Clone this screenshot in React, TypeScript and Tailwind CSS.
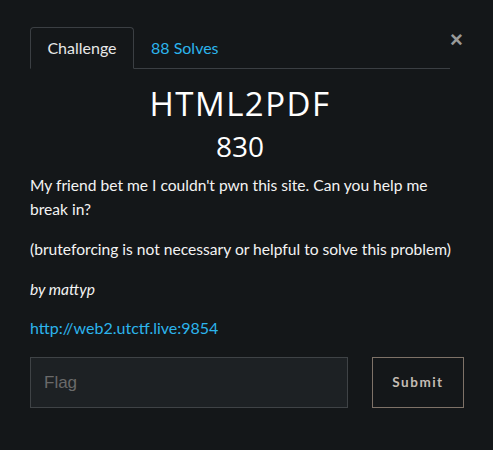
import React from "react";

export default function App() {
  return (
    <div className="w-[493px] h-[450px] bg-[#141719] text-white font-['Lato',sans-serif] relative overflow-hidden">
      <button className="absolute left-[450px] top-[29px] text-[#9a9a9a] text-[22px] leading-none font-bold font-['Liberation_Sans',sans-serif]">
        ×
      </button>
      <div className="pl-[30px] pr-[29px] pt-[27px]">
        <div className="flex border-b border-[#3b3f43] w-[420px]">
          <div className="h-[42px] w-[104px] -mb-px border border-[#3b3f43] border-b-[#141719] rounded-t-[4px] flex items-center justify-center text-[16px] text-[#e8e8e8]">
            Challenge
          </div>
          <div className="h-[41px] pl-[17px] flex items-center text-[16px] text-[#2cb4ec]">
            88 Solves
          </div>
        </div>
        <div className="w-[420px] text-center mt-[15px] text-[33px] leading-[40px] tracking-[1.5px] font-['Open_Sans',sans-serif] font-normal">
          HTML2PDF
        </div>
        <div className="w-[420px] text-center mt-[5px] text-[28px] leading-[34px] font-['Open_Sans',sans-serif]">
          830
        </div>
        <div className="mt-[10px] text-[15.6px] leading-[24px] text-[#f3f3f3]">
          <p className="w-[420px]">My friend bet me I couldn't pwn this site. Can you help me break in?</p>
          <p className="mt-[16px] whitespace-nowrap">(bruteforcing is not necessary or helpful to solve this problem)</p>
          <p className="mt-[16px] italic">by mattyp</p>
          <p className="mt-[15px]">
            <a className="text-[#2cb4ec] text-[16px]">http://web2.utctf.live:9854</a>
          </p>
        </div>
        <div className="mt-[17px] flex gap-[24px] w-[434px]">
          <div className="w-[318px] h-[51px] bg-[#1d2124] border border-[#3f4346] flex items-center pl-[13px] text-[17px] text-[#6a6a6a] font-['Liberation_Sans',sans-serif]">
            Flag
          </div>
          <button className="w-[92px] h-[51px] border border-[#7e7268] flex items-center justify-center text-[13.5px] font-bold tracking-[1.5px] text-[#c4bcb4]">
            Submit
          </button>
        </div>
      </div>
    </div>
  );
}
